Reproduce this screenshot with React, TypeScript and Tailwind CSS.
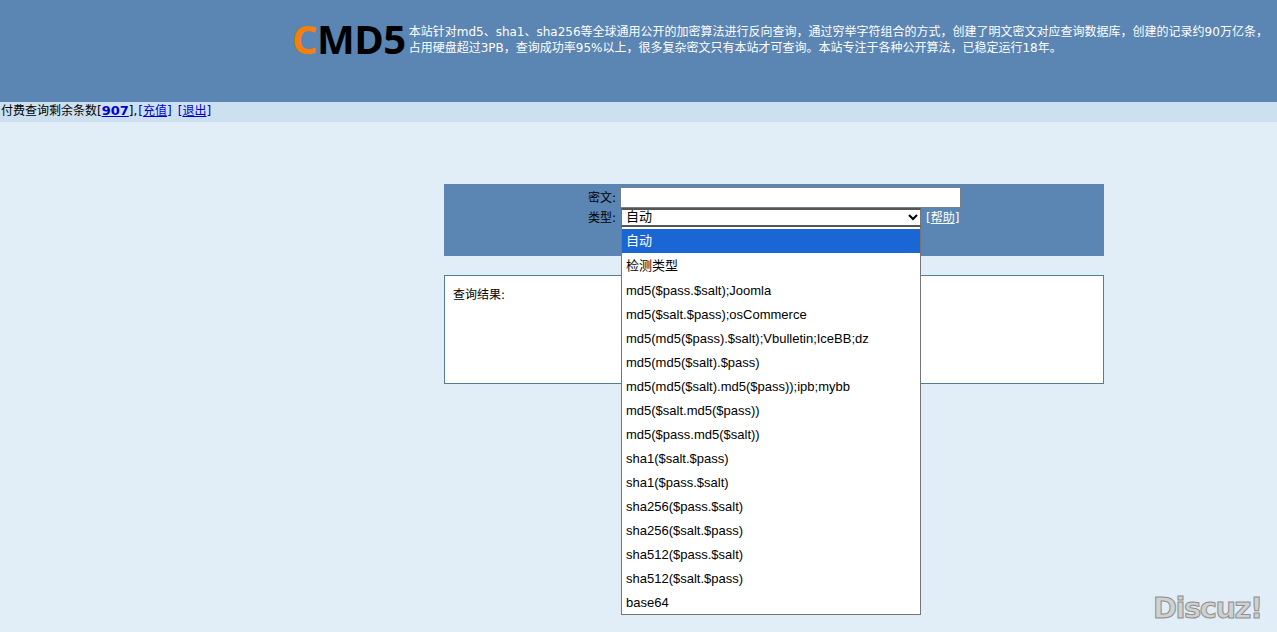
const options = [
  '检测类型',
  'md5($pass.$salt);Joomla',
  'md5($salt.$pass);osCommerce',
  'md5(md5($pass).$salt);Vbulletin;IceBB;dz',
  'md5(md5($salt).$pass)',
  'md5(md5($salt).md5($pass));ipb;mybb',
  'md5($salt.md5($pass))',
  'md5($pass.md5($salt))',
  'sha1($salt.$pass)',
  'sha1($pass.$salt)',
  'sha256($pass.$salt)',
  'sha256($salt.$pass)',
  'sha512($pass.$salt)',
  'sha512($salt.$pass)',
  'base64',
];

export default function App() {
  return (
    <div className="relative h-[632px] overflow-hidden bg-[#e1eef7] font-['DejaVu_Sans','Noto_Sans_CJK_SC',sans-serif] text-[12px] text-black">
      {/* Header */}
      <header className="flex h-[102px] bg-[#5b85b2] pt-[23px] pl-[292px]">
        <div className="h-[32px] shrink-0 font-['Open_Sans',sans-serif] text-[40px] leading-[32px] font-bold tracking-[-0.5px]">
          <span className="text-[#f57f0a]">C</span>
          <span className="text-black">MD5</span>
        </div>
        <p className="ml-[3px] w-[860px] pt-px text-[12px] leading-[16px] text-white">
          本站针对md5、sha1、sha256等全球通用公开的加密算法进行反向查询，通过穷举字符组合的方式，创建了明文密文对应查询数据库，创建的记录约90万亿条，
          <br />
          占用硬盘超过3PB，查询成功率95%以上，很多复杂密文只有本站才可查询。本站专注于各种公开算法，已稳定运行18年。
        </p>
      </header>

      {/* User bar */}
      <div className="flex h-[20px] items-start bg-[#cce0f0] pl-px leading-[18px]">
        付费查询剩余条数[
        <a className="text-[13px] font-bold text-[#0000cc] underline">907</a>
        ],
        <a className="ml-px text-[#0000cc]">
          [<span className="underline">充值</span>]
        </a>
        <a className="ml-[6px] text-[#0000cc]">
          [<span className="underline">退出</span>]
        </a>
      </div>

      <main className="ml-[444px] w-[660px] pt-[62px]">
        {/* Search form */}
        <form className="h-[72px] bg-[#5b85b2] pt-[3px]">
          <div className="flex h-[21px] items-center">
            <label className="w-[176px] pr-[4px] text-right">密文:</label>
            <input className="h-[21px] w-[341px] border border-[#76808a] bg-white" />
          </div>
          <div className="flex h-[19px] items-center">
            <label className="w-[176px] pr-[4px] text-right">类型:</label>
            <div className="ml-px flex h-[19px] w-[300px] items-center justify-between border-x border-t-2 border-b-2 border-x-[#767676] border-t-[#555] border-b-[#555] bg-white pr-[2px] pb-px pl-[4px] text-[13px] leading-[14px]">
              <span>自动</span>
              <svg width="10" height="7" viewBox="0 0 10 7" fill="none" stroke="#000" strokeWidth="2">
                <path d="M1 1l4 4 4-4" />
              </svg>
            </div>
            <a className="ml-[5px] text-white">
              [<span className="underline">帮助</span>]
            </a>
          </div>
        </form>

        {/* Results */}
        <section className="mt-[19px] h-[109px] border border-[#4f7f93] bg-white pt-[10px] pl-[8px]">
          查询结果:
        </section>
      </main>

      {/* Open select list */}
      <ul className="absolute top-[227px] left-[621px] w-[300px] border-x border-b border-[#767676] bg-white pt-[2px] font-['Liberation_Sans','Noto_Sans_CJK_SC',sans-serif] text-[13px]">
        <li className="flex h-[24px] items-center bg-[#1a66d4] pl-[4px] text-white">自动</li>
        {options.map((o, i) => (
          <li key={o} className={`flex items-center pt-px pl-[4px] ${i === 0 ? 'h-[25px]' : 'h-[24px]'}`}>
            {o}
          </li>
        ))}
      </ul>

      {/* Watermark */}
      <div className="absolute top-[586px] left-[1153px] font-['DejaVu_Sans',sans-serif] text-[29px] leading-[44px] font-bold tracking-[-1.5px] text-[#d0d0d0] [-webkit-text-stroke:1px_#8f8f8f]">
        Discuz!
      </div>
    </div>
  );
}
